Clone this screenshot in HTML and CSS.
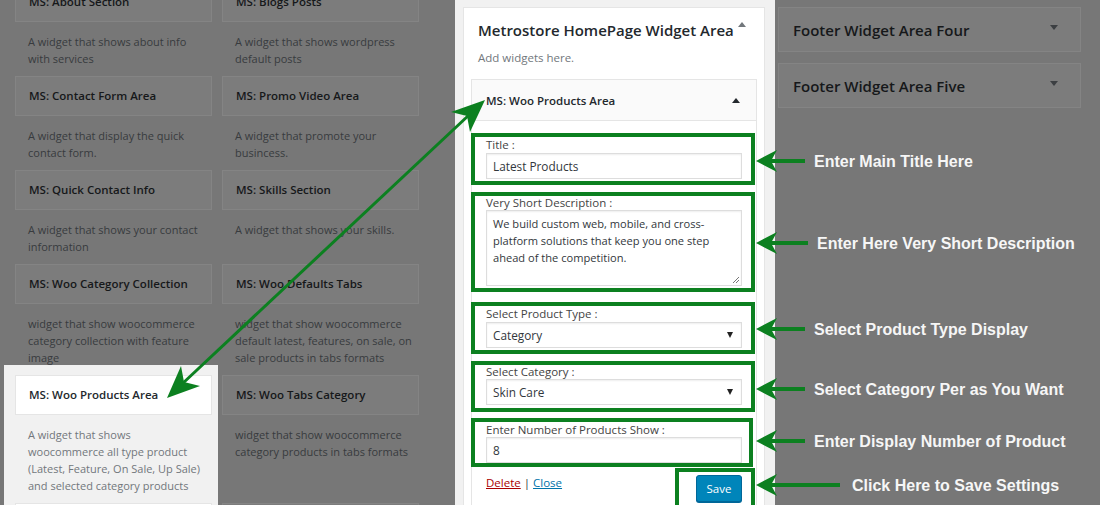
FILE: index.html
```html
<!DOCTYPE html>
<html lang="en">
<head>
<meta charset="utf-8">
<title>Widgets</title>
<link rel="stylesheet" href="styles.css">
</head>
<body>
<div class="page">
  <section class="available">
    <div class="grid">
      <div class="cell"><div class="wtop">MS: About Section</div><div class="wdesc">A widget that shows about info<br>with services</div></div>
      <div class="cell"><div class="wtop">MS: Blogs Posts</div><div class="wdesc">A widget that shows wordpress<br>default posts</div></div>
      <div class="cell"><div class="wtop">MS: Contact Form Area</div><div class="wdesc">A widget that display the quick<br>contact form.</div></div>
      <div class="cell"><div class="wtop">MS: Promo Video Area</div><div class="wdesc">A widget that promote your<br>busincess.</div></div>
      <div class="cell"><div class="wtop">MS: Quick Contact Info</div><div class="wdesc">A widget that shows your contact<br>information</div></div>
      <div class="cell"><div class="wtop">MS: Skills Section</div><div class="wdesc">A widget that shows your skills.</div></div>
      <div class="cell"><div class="wtop">MS: Woo Category Collection</div><div class="wdesc">widget that show woocommerce<br>category collection with feature<br>image</div></div>
      <div class="cell"><div class="wtop">MS: Woo Defaults Tabs</div><div class="wdesc">widget that show woocommerce<br>default latest, features, on sale, on<br>sale products in tabs formats</div></div>
      <div class="cell active"><div class="wtop">MS: Woo Products Area</div><div class="wdesc">A widget that shows<br>woocommerce all type product<br>(Latest, Feature, On Sale, Up Sale)<br>and selected category products</div></div>
      <div class="cell"><div class="wtop">MS: Woo Tabs Category</div><div class="wdesc">widget that show woocommerce<br>category products in tabs formats</div></div>
      <div class="cell active-next"><div class="wtop"></div></div>
      <div class="cell"><div class="wtop"></div></div>
    </div>
  </section>

  <section class="center">
    <div class="sidebar">
      <h2 class="sb-title">Metrostore HomePage Widget Area<span class="tri tri-up"></span></h2>
      <p class="sb-desc">Add widgets here.</p>
      <div class="widget">
        <div class="widget-top"><span>MS: Woo Products Area</span><span class="tri tri-up dark"></span></div>
        <div class="widget-inside">
          <div class="field f1">
            <label class="lbl">Title :</label>
            <div class="input">Latest Products</div>
          </div>
          <div class="field f2">
            <label class="lbl">Very Short Description :</label>
            <div class="textarea">We build custom web, mobile, and cross-<br>platform solutions that keep you one step<br>ahead of the competition.
              <svg class="grip" width="7" height="7" viewBox="0 0 7 7"><path d="M1 7 L7 1 M4 7 L7 4" stroke="#777" stroke-width="1"/></svg>
            </div>
          </div>
          <div class="field f3">
            <label class="lbl">Select Product Type :</label>
            <div class="input select">Category<span class="caret"></span></div>
          </div>
          <div class="field f4">
            <label class="lbl">Select Category :</label>
            <div class="input select">Skin Care<span class="caret"></span></div>
          </div>
          <div class="field f5">
            <label class="lbl">Enter Number of Products Show :</label>
            <div class="input">8</div>
          </div>
          <div class="actions">
            <div class="links"><a class="del">Delete</a> | <a class="cls">Close</a></div>
            <div class="savebox"><button class="save">Save</button></div>
          </div>
        </div>
      </div>
    </div>
  </section>

  <section class="footers">
    <div class="fcard">Footer Widget Area Four<span class="tri tri-down"></span></div>
    <div class="fcard">Footer Widget Area Five<span class="tri tri-down"></span></div>
  </section>
</div>

<svg class="annot" width="1100" height="505" viewBox="0 0 1100 505">
  <g class="arrow-lines">
    <line x1="770" y1="161" x2="805" y2="161"/>
    <line x1="770" y1="243" x2="808" y2="243"/>
    <line x1="770" y1="329" x2="805" y2="329"/>
    <line x1="770" y1="389" x2="805" y2="389"/>
    <line x1="770" y1="441" x2="805" y2="441"/>
    <line x1="770" y1="485" x2="840" y2="485"/>
    <line class="diag" x1="182" y1="384" x2="469" y2="115"/>
  </g>
  <g class="arrow-heads">
    <path d="M756 161 L777 150 L771 161 L777 172 Z"/>
    <path d="M756 243 L777 232 L771 243 L777 254 Z"/>
    <path d="M756 329 L777 318 L771 329 L777 340 Z"/>
    <path d="M756 389 L777 378 L771 389 L777 400 Z"/>
    <path d="M756 441 L777 430 L771 441 L777 452 Z"/>
    <path d="M756 485 L777 474 L771 485 L777 496 Z"/>
    <path d="M167 398 L200 386 L184 382 L181 366 Z"/>
    <path d="M485 100 L470 132 L467 116 L451 112 Z"/>
  </g>
  <g class="notes">
    <text x="814" y="167">Enter Main Title Here</text>
    <text x="817" y="249">Enter Here Very Short Description</text>
    <text x="814" y="335">Select Product Type Display</text>
    <text x="814" y="395">Select Category Per as You Want</text>
    <text x="814" y="447">Enter Display Number of Product</text>
    <text x="852" y="491">Click Here to Save Settings</text>
  </g>
</svg>
</body>
</html>
```

FILE: styles.css
```css
* { box-sizing: border-box; }
html, body { margin: 0; padding: 0; }
body {
  width: 1100px;
  height: 505px;
  overflow: hidden;
  position: relative;
  background: #777777;
  font-family: "Open Sans", "Noto Sans", sans-serif;
}
.page { display: flex; height: 505px; align-items: flex-start; overflow: hidden; }

/* ---------- available widgets (dimmed) ---------- */
.available { width: 455px; padding-left: 15px; flex: none; }
.grid {
  display: grid;
  grid-template-columns: 197px 197px;
  column-gap: 10px;
  margin-top: -18px;
  align-items: start;
}
.wtop {
  height: 40px;
  border: 1px solid #848484;
  background: #7c7c7c;
  padding: 0 13px;
  font-size: 11.5px;
  font-weight: 600;
  line-height: 38px;
  color: #16181a;
  white-space: nowrap;
}
.wdesc {
  padding: 11px 13px 9px;
  font-size: 11px;
  line-height: 17px;
  color: #383b3e;
  white-space: nowrap;
}
.cell.active {
  background: #f1f1f1;
  margin: -10px -6px 0 -11px;
  padding: 10px 6px 0 11px;
}
.cell.active .wtop { background: #fff; border-color: #e5e5e5; color: #23282d; }
.cell.active .wdesc { color: #72777c; }
.cell.active-next {
  background: #f1f1f1;
  margin: 0 -6px 0 -11px;
  padding: 0 6px 20px 11px;
}
.cell.active-next .wtop { background: #fff; border-color: #e5e5e5; }

/* ---------- center sidebar ---------- */
.center {
  width: 320px;
  flex: none;
  height: 505px;
  background: #f1f1f1;
  padding: 7px 10px 0 8px;
}
.sidebar {
  background: #fff;
  border: 1px solid #e5e5e5;
  height: 520px;
}
.sb-title {
  margin: 0;
  padding: 11px 0 0 14px;
  font-size: 15px;
  font-weight: 600;
  line-height: 22px;
  color: #23282d;
  white-space: nowrap;
}
.sb-desc {
  margin: 9px 0 0 14px;
  font-size: 11.5px;
  line-height: 16px;
  color: #72777c;
}
.tri { display: inline-block; width: 0; height: 0; border-left: 4px solid transparent; border-right: 4px solid transparent; }
.tri-up { border-bottom: 5px solid #72777c; vertical-align: 9px; margin-left: 4px; }
.tri-up.dark { border-bottom-color: #23282d; vertical-align: middle; margin: 0; }
.tri-down { border-top: 5px solid #3c3f42; }

.widget { margin: 13px 7px 0; }
.widget-top {
  height: 42px;
  background: #fafafa;
  border: 1px solid #e5e5e5;
  padding: 0 16px 0 14px;
  display: flex;
  align-items: center;
  justify-content: space-between;
  font-size: 11.5px;
  font-weight: 600;
  color: #23282d;
}
.widget-inside {
  border: 1px solid #e5e5e5;
  border-top: none;
  background: #fff;
  padding-top: 12px;
  height: 400px;
}
.field {
  border: 4px solid #0c8020;
  margin-left: -1px;
  width: 284px;
  padding: 0 9px 2px 11px;
}
.f2 { margin-top: 7px; }
.f3 { margin-top: 10px; }
.f4 { margin-top: 7px; padding-bottom: 3px; }
.f5 { margin-top: 6px; width: 282px; padding-right: 7px; padding-bottom: 0; }
.lbl {
  display: block;
  font-size: 11.5px;
  line-height: 16px;
  color: #444;
}
.f2 .lbl, .f4 .lbl { line-height: 14px; }
.f5 .lbl { line-height: 15px; }
.input {
  height: 26px;
  border: 1px solid #ddd;
  box-shadow: inset 0 1px 2px rgba(0,0,0,.07);
  padding: 0 6px;
  font-size: 11.8px;
  line-height: 24px;
  color: #32373c;
  position: relative;
}
.select { display: flex; justify-content: space-between; align-items: center; padding-right: 8px; }
.caret { width: 0; height: 0; border-left: 3.5px solid transparent; border-right: 3.5px solid transparent; border-top: 6px solid #222; }
.textarea {
  position: relative;
  height: 76px;
  border: 1px solid #ddd;
  box-shadow: inset 0 1px 2px rgba(0,0,0,.07);
  padding: 4px 6px;
  font-size: 11.1px;
  line-height: 17px;
  color: #32373c;
  white-space: nowrap;
}
.grip { position: absolute; right: 2px; bottom: 2px; }

.actions { display: flex; justify-content: space-between; align-items: flex-start; }
.links {
  padding: 8px 0 0 14px;
  font-size: 11.5px;
  line-height: 16px;
  color: #32373c;
}
.del { color: #a00; text-decoration: underline; }
.cls { color: #0073aa; text-decoration: underline; }
.savebox {
  width: 80px;
  height: 45px;
  margin-top: 1px;
  margin-right: 1px;
  border: 4px solid #0c8020;
  padding: 3px 0 0 17px;
}
.save {
  width: 46px;
  height: 27px;
  background: #0085ba;
  border: 1px solid #006799;
  border-radius: 3px;
  box-shadow: 0 1px 0 #006799;
  color: #fff;
  font-family: "Open Sans", sans-serif;
  font-size: 11.5px;
  padding: 0;
}

/* ---------- footer areas (dimmed) ---------- */
.footers { flex: 1; padding: 7px 19px 0 3px; display: flex; flex-direction: column; gap: 11px; }
.fcard {
  height: 45px;
  border: 1px solid #848484;
  background: #7c7c7c;
  padding: 0 22px 0 14px;
  display: flex;
  align-items: center;
  justify-content: space-between;
  font-size: 15px;
  font-weight: 600;
  color: #16181a;
}
.fcard .tri-down { align-self: flex-start; margin-top: 17px; }

/* ---------- annotation overlay ---------- */
.annot { position: absolute; left: 0; top: 0; pointer-events: none; }
.arrow-lines line { stroke: #0c8020; stroke-width: 4; }
.arrow-lines .diag { stroke-width: 3; }
.arrow-heads path { fill: #0c8020; }
.notes text {
  fill: #f6f6f6;
  font-family: "Liberation Sans", Arial, sans-serif;
  font-weight: bold;
  font-size: 16px;
}
```
